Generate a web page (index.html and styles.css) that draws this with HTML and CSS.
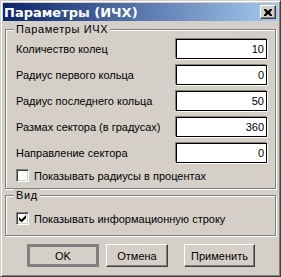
FILE: index.html
```html
<!DOCTYPE html>
<html lang="ru">
<head>
<meta charset="utf-8">
<link rel="stylesheet" href="styles.css">
</head>
<body>
<div class="window">
  <div class="titlebar">
    <span class="title">Параметры (ИЧХ)</span>
    <span class="close">
      <svg width="8" height="7" viewBox="0 0 8 7"><path d="M0 0h2l2 2 2-2h2v1L6 3.5 8 6v1H6L4 5 2 7H0V6l2-2.5L0 1z" fill="#000"/></svg>
    </span>
  </div>
  <div class="group g1">
    <span class="legend">Параметры ИЧХ</span>
    <div class="row"><span class="label">Количество колец</span><span class="input">10</span></div>
    <div class="row"><span class="label">Радиус первого кольца</span><span class="input">0</span></div>
    <div class="row"><span class="label">Радиус последнего кольца</span><span class="input">50</span></div>
    <div class="row"><span class="label">Размах сектора (в градусах)</span><span class="input">360</span></div>
    <div class="row"><span class="label">Направление сектора</span><span class="input">0</span></div>
    <div class="check-row"><span class="checkbox"></span><span>Показывать радиусы в процентах</span></div>
  </div>
  <div class="group g2">
    <span class="legend">Вид</span>
    <div class="check-row"><span class="checkbox"><svg width="7" height="7" viewBox="0 0 7 7"><path d="M0 2v3l2 2h1l4-4V0L2.5 4.5z" fill="#000"/></svg></span><span>Показывать информационную строку</span></div>
  </div>
  <div class="buttons">
    <span class="btn btn-ok">OK</span>
    <span class="btn btn-cancel">Отмена</span>
    <span class="btn btn-apply">Применить</span>
  </div>
</div>
</body>
</html>
```
FILE: styles.css
```css
* { box-sizing: border-box; }
html, body { margin: 0; padding: 0; background: #D4D0C8; }
body {
  font-family: "Liberation Sans", Arial, sans-serif;
  font-size: 11px;
  color: #000;
}
.window {
  width: 281px;
  height: 277px;
  border: 1px solid;
  border-color: #D4D0C8 #404040 #404040 #D4D0C8;
  box-shadow: inset 1px 1px 0 #fff, inset -1px -1px 0 #808080;
  padding: 2px;
  display: flex;
  flex-direction: column;
}
.titlebar {
  height: 18px;
  background: linear-gradient(to right, #0A246A, #A6CAF0);
  display: flex;
  align-items: center;
  justify-content: space-between;
  padding: 0 2px 0 1px;
}
.title {
  color: #fff;
  font-family: "DejaVu Sans", Verdana, sans-serif;
  font-weight: bold;
  font-size: 13px;
}
.close {
  width: 16px;
  height: 14px;
  background: #D4D0C8;
  border: 1px solid;
  border-color: #fff #404040 #404040 #fff;
  box-shadow: inset -1px -1px 0 #808080;
  display: flex;
  align-items: center;
  justify-content: center;
  padding-right: 1px;
}
.group {
  position: relative;
  margin: 0 2px;
  border: 1px solid #808080;
  box-shadow: 1px 1px 0 #fff, inset 1px 1px 0 #fff;
}
.g1 {
  margin-top: 8px;
  padding: 9px 8px 6px 10px;
  display: flex;
  flex-direction: column;
  gap: 6px;
}
.g2 {
  margin-top: 6px;
  padding: 16px 8px 10px 10px;
}
.legend {
  position: absolute;
  left: 8px;
  top: -7px;
  padding: 0 2px;
  background: #D4D0C8;
  line-height: 13px;
  letter-spacing: 0.6px;
}
.row {
  display: flex;
  align-items: center;
  justify-content: space-between;
  height: 20px;
}
.input {
  width: 91px;
  height: 20px;
  background: #fff;
  border: 1px solid #000;
  box-shadow: -1px -1px 0 #808080, 1px 1px 0 #fff;
  text-align: right;
  padding: 0 2px;
  line-height: 18px;
}
.check-row {
  display: flex;
  align-items: center;
  height: 13px;
  gap: 5px;
}
.checkbox {
  width: 13px;
  height: 13px;
  background: #fff;
  border: 1px solid;
  border-color: #808080 #fff #fff #808080;
  box-shadow: inset 1px 1px 0 #404040, inset -1px -1px 0 #D4D0C8;
  display: flex;
  align-items: center;
  justify-content: center;
}
.buttons {
  margin-top: 8px;
  display: flex;
  height: 23px;
  padding-left: 24px;
}
.btn {
  height: 23px;
  display: flex;
  align-items: center;
  justify-content: center;
  border: 1px solid;
  border-color: #fff #404040 #404040 #fff;
  box-shadow: inset -1px -1px 0 #808080;
}
.btn-ok {
  width: 72px;
  border: 3px solid #808080;
  box-shadow: none;
}
.btn-cancel { width: 62px; margin-left: 7px; }
.btn-apply { width: 71px; margin-left: 16px; }
```
